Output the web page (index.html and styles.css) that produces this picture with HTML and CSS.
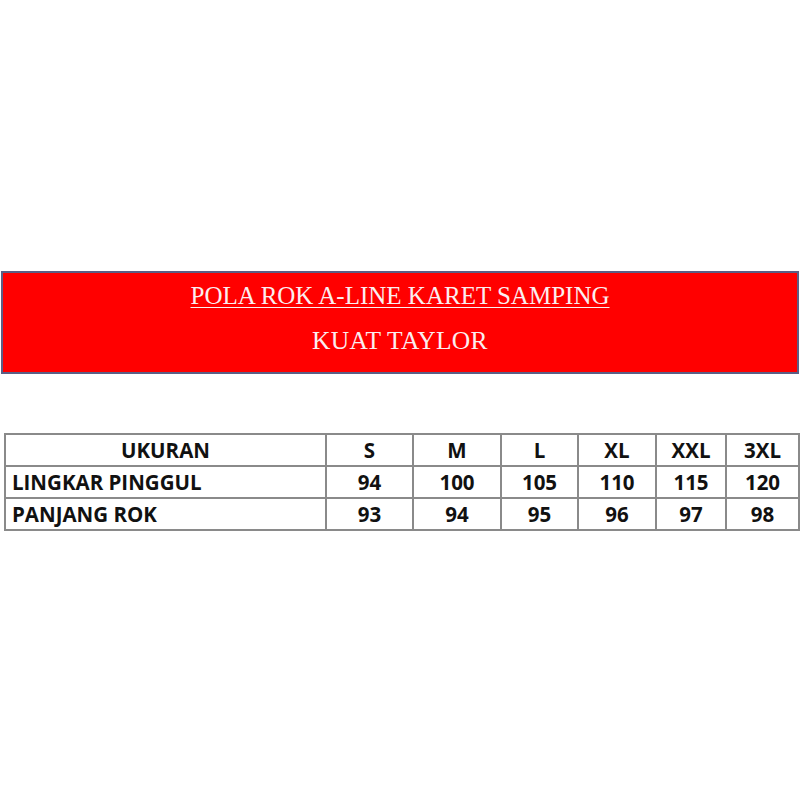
FILE: index.html
```html
<!DOCTYPE html>
<html>
<head>
<meta charset="utf-8">
<link rel="stylesheet" href="styles.css">
</head>
<body>
<div class="page">
  <div class="banner">
    <div class="title">POLA ROK A-LINE KARET SAMPING</div>
    <div class="subtitle">KUAT TAYLOR</div>
  </div>
  <table class="sizes">
    <colgroup>
      <col class="c0"><col class="c1"><col class="c2"><col class="c3"><col class="c4"><col class="c5"><col class="c6">
    </colgroup>
    <tr><td class="center">UKURAN</td><td>S</td><td>M</td><td>L</td><td>XL</td><td>XXL</td><td>3XL</td></tr>
    <tr><td class="label">LINGKAR PINGGUL</td><td>94</td><td>100</td><td>105</td><td>110</td><td>115</td><td>120</td></tr>
    <tr><td class="label">PANJANG ROK</td><td>93</td><td>94</td><td>95</td><td>96</td><td>97</td><td>98</td></tr>
  </table>
</div>
</body>
</html>
```
FILE: styles.css
```css
html, body {
  margin: 0;
  padding: 0;
  background: #ffffff;
}
.page {
  width: 800px;
  height: 800px;
  padding-top: 271px;
  box-sizing: border-box;
}
.banner {
  margin-left: 1px;
  width: 798px;
  height: 103px;
  box-sizing: border-box;
  background: #ff0000;
  border: 2px solid #5b5f85;
  display: flex;
  flex-direction: column;
  align-items: center;
  font-family: "Liberation Serif", "Times New Roman", serif;
  color: #fbeef0;
}
.title {
  margin-top: 9px;
  font-size: 25px;
  line-height: 28px;
  text-decoration: underline;
  text-decoration-thickness: 1px;
  text-underline-offset: 3px;
}
.subtitle {
  margin-top: 17px;
  font-size: 25.5px;
  letter-spacing: 0.3px;
  line-height: 28px;
}
.sizes {
  margin-top: 59px;
  margin-left: 4px;
  border-collapse: collapse;
  table-layout: fixed;
  width: 794px;
  font-family: "Open Sans", "Liberation Sans", sans-serif;
  font-weight: 700;
  font-size: 20.5px;
  color: #111111;
}
.sizes td {
  border: 2px solid #8a8a8a;
  height: 30px;
  padding: 0;
  text-align: center;
  line-height: 30px;
}
.sizes td.label {
  text-align: left;
  padding-left: 6px;
}
.c0 { width: 321px; }
.c1 { width: 87px; }
.c2 { width: 88px; }
.c3 { width: 77px; }
.c4 { width: 78px; }
.c5 { width: 70px; }
.c6 { width: 73px; }
```
